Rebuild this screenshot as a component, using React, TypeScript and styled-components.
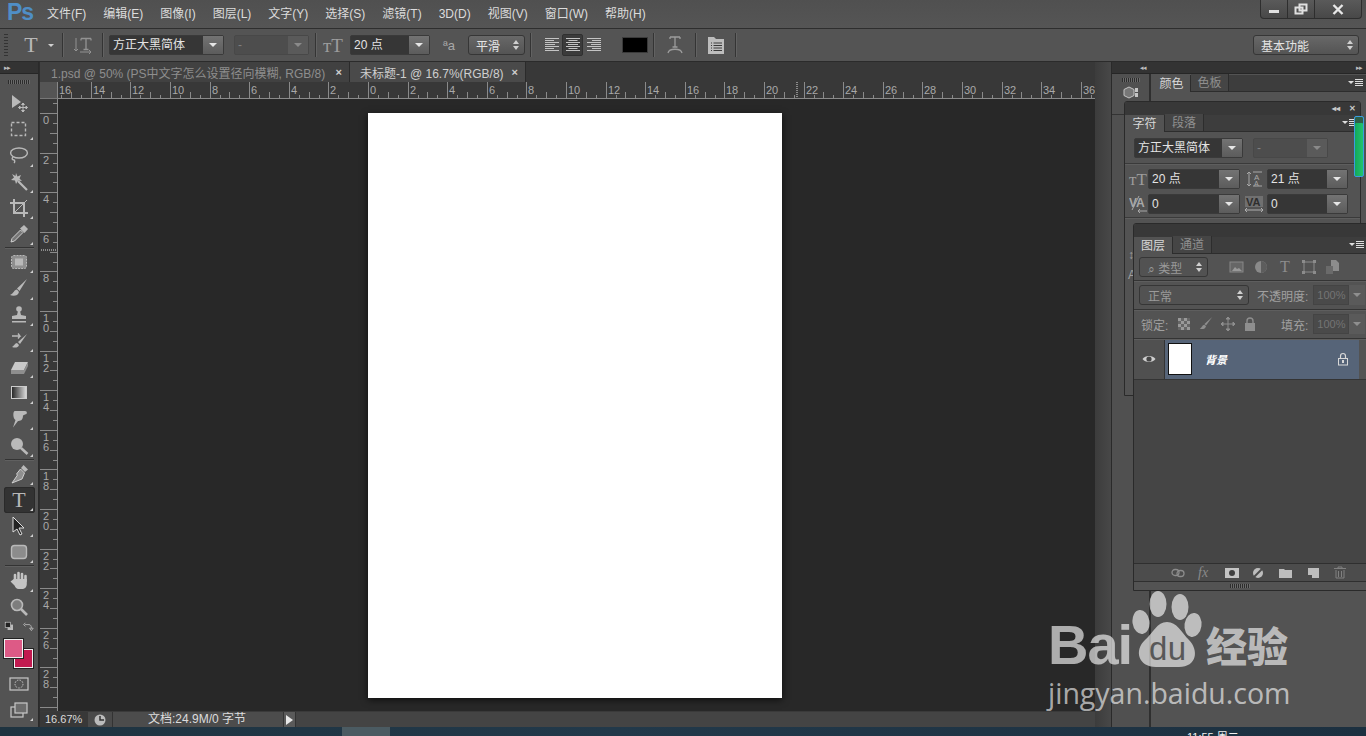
import React from 'react';
import styled, { createGlobalStyle } from 'styled-components';

const GlobalStyle = createGlobalStyle`
    html, body {
        margin: 0;
        padding: 0;
        background: #535353;
    }
    * {
        box-sizing: border-box;
    }
`;

const FONT = `"Liberation Sans", "Noto Sans CJK SC", sans-serif`;

const Page = styled.div`
    position: relative;
    width: 1366px;
    height: 736px;
    overflow: hidden;
    display: flex;
    flex-direction: column;
    background: #535353;
    font-family: ${FONT};
    font-size: 12px;
    color: #d6d6d6;
`;

/* top menu */
const MenuBar = styled.div`
    height: 29px;
    flex: none;
    display: flex;
    align-items: flex-start;
    border-bottom: 1px solid #2e2e2e;
    background: linear-gradient(#505050, #555555);
`;

const Logo = styled.div`
    width: 47px;
    padding: 0 0 0 7px;
    font-size: 23px;
    font-weight: 700;
    letter-spacing: -1px;
    line-height: 25px;
    color: #4f8ec6;
    flex: none;
`;

const MenuList = styled.div`
    display: flex;
    gap: 17px;
    padding-top: 6px;
    line-height: 16px;
    color: #dcdcdc;
`;

const WindowButtons = styled.div`
    margin-left: auto;
    margin-right: 4px;
    width: 102px;
    height: 19px;
    display: flex;
    border: 1px solid #2e2e2e;
    border-top: 0;
    border-radius: 0 0 4px 4px;
    background: linear-gradient(#5a5a5a, #484848);
`;

const WindowButton = styled.div<{ $w: number }>`
    width: ${p => p.$w}px;
    display: flex;
    align-items: center;
    justify-content: center;
    border-right: 1px solid #2e2e2e;
    &:last-child {
        border-right: 0;
    }
`;

/* options bar */
const OptionsBar = styled.div`
    height: 33px;
    flex: none;
    display: flex;
    align-items: center;
    border-bottom: 1px solid #2b2b2b;
    background: #545454;
    position: relative;
`;

const Grip = styled.div`
    width: 4px;
    height: 22px;
    margin-left: 4px;
    background: repeating-linear-gradient(#333 0 1px, transparent 1px 3px);
    flex: none;
`;

const Slot = styled.div<{ $w: number; $dim?: boolean }>`
    width: ${p => p.$w}px;
    height: 100%;
    flex: none;
    display: flex;
    align-items: center;
    justify-content: center;
    opacity: ${p => (p.$dim ? 0.55 : 1)};
`;

const Divider = styled.div`
    width: 1px;
    height: 24px;
    flex: none;
    background: #343434;
    box-shadow: 1px 0 0 #626262;
`;

const SelectWrap = styled.div<{ $w: number; $off?: boolean }>`
    width: ${p => p.$w}px;
    height: 20px;
    flex: none;
    display: flex;
    border: 1px solid ${p => (p.$off ? '#484848' : '#3a3a3a')};
    border-radius: 2px;
    background: ${p => (p.$off ? '#4d4d4d' : '#363636')};
    color: ${p => (p.$off ? '#808080' : '#e4e4e4')};
    line-height: 19px;
`;

const SelectText = styled.div`
    flex: 1;
    padding-left: 3px;
    white-space: nowrap;
    overflow: hidden;
`;

const SelectArrow = styled.div<{ $off?: boolean }>`
    width: 20px;
    flex: none;
    display: flex;
    align-items: center;
    justify-content: center;
    background: ${p => (p.$off ? '#5a5a5a' : 'linear-gradient(#737373, #5c5c5c)')};
    &::after {
        content: '';
        border-left: 4px solid transparent;
        border-right: 4px solid transparent;
        border-top: 4px solid ${p => (p.$off ? '#8a8a8a' : '#e6e6e6')};
    }
`;

const Spinner = styled.div<{ $w: number; $dim?: boolean; $flat?: boolean; $left?: number; $right?: number }>`
    width: ${p => p.$w}px;
    height: 20px;
    flex: none;
    display: flex;
    align-items: center;
    justify-content: space-between;
    margin-left: ${p => p.$left ?? 0}px;
    margin-right: ${p => p.$right ?? 0}px;
    padding: 0 5px 0 ${p => (p.$flat ? 8 : 7)}px;
    border: 1px solid #363636;
    border-radius: 3px;
    color: ${p => (p.$dim ? '#9a9a9a' : '#e4e4e4')};
    background: ${p => (p.$flat ? '#525252' : 'linear-gradient(#686868, #545454)')};
`;

const SpinArrows = styled.span`
    display: flex;
    flex-direction: column;
    gap: 2px;
    &::before, &::after {
        content: '';
        border-left: 3px solid transparent;
        border-right: 3px solid transparent;
    }
    &::before {
        border-bottom: 4px solid #d0d0d0;
    }
    &::after {
        border-top: 4px solid #d0d0d0;
    }
`;

const SmallCaret = styled.span`
    border-left: 3px solid transparent;
    border-right: 3px solid transparent;
    border-top: 3px solid #d0d0d0;
`;

const BigT = styled.span<{ $size?: number; $color?: string }>`
    font-family: "Liberation Serif", serif;
    font-size: ${p => p.$size ?? 20}px;
    line-height: 1;
    color: ${p => p.$color ?? '#b8b8b8'};
`;

const AaGlyph = styled.span`
    color: #a8a8a8;
    font-size: 13px;
`;

const AlignBox = styled.div<{ $on?: boolean }>`
    width: 21px;
    height: 22px;
    flex: none;
    display: flex;
    align-items: center;
    justify-content: center;
    border-radius: 2px;
    background: ${p => (p.$on ? '#3b3b3b' : 'transparent')};
    border: 1px solid ${p => (p.$on ? '#303030' : 'transparent')};
`;

const Swatch = styled.div`
    width: 26px;
    height: 16px;
    flex: none;
    background: #000;
    border: 1px solid #3a3a3a;
`;

const Push = styled.div`
    flex: 1;
`;

/* workspace */
const Workspace = styled.div`
    flex: 1;
    min-height: 0;
    display: flex;
    background: #2d2d2d;
`;

const Toolbox = styled.div`
    width: 39px;
    margin-right: 1px;
    flex: none;
    display: flex;
    flex-direction: column;
    align-items: center;
    background: #535353;
    border-right: 1px solid #2a2a2a;
`;

const DockHead = styled.div`
    height: 12px;
    width: 100%;
    flex: none;
    display: flex;
    align-items: center;
    justify-content: space-between;
    padding: 0 4px;
    font-size: 7px;
    letter-spacing: -1px;
    color: #bdbdbd;
    background: #333333;
    border-bottom: 1px solid #262626;
`;

const HeadLeft = styled.span`
    margin-left: 24px;
`;

const TinyGrip = styled.div<{ $w?: number; $y?: number; $x?: string }>`
    width: ${p => p.$w ?? 22}px;
    height: 4px;
    flex: none;
    margin: ${p => p.$y ?? 4}px ${p => p.$x ?? 'auto'} ${p => p.$y ?? 4}px;
    background: repeating-linear-gradient(90deg, #2c2c2c 0 1px, #6a6a6a 1px 2px);
`;

const ToolButton = styled.div<{ $on?: boolean; $more?: boolean; $h?: number; $top?: number }>`
    position: relative;
    width: 31px;
    height: ${p => p.$h ?? 26.2}px;
    margin-top: ${p => p.$top ?? 0}px;
    flex: none;
    display: flex;
    align-items: center;
    justify-content: center;
    border-radius: 3px;
    background: ${p => (p.$on ? '#333333' : 'transparent')};
    box-shadow: ${p => (p.$on ? 'inset 0 0 0 1px #2a2a2a' : 'none')};
    &::after {
        content: '';
        display: ${p => (p.$more ? 'block' : 'none')};
        position: absolute;
        right: 2px;
        bottom: 2px;
        border-left: 3px solid transparent;
        border-bottom: 3px solid #cfcfcf;
    }
`;

const ToolSep = styled.div`
    width: 29px;
    height: 1px;
    margin-bottom: 1px;
    flex: none;
    background: #333;
    box-shadow: 0 1px 0 #606060;
`;

const Colors = styled.div`
    position: relative;
    width: 30px;
    height: 29px;
    flex: none;
`;

const ColorChip = styled.div<{ $bg: string; $front?: boolean }>`
    position: absolute;
    width: 19px;
    height: 19px;
    left: ${p => (p.$front ? 0 : 10)}px;
    top: ${p => (p.$front ? 0 : 10)}px;
    background: ${p => p.$bg};
    border: 1px solid #f0f0f0;
    outline: 1px solid #222;
    z-index: ${p => (p.$front ? 1 : 0)};
`;

const DocColumn = styled.div`
    flex: 1;
    min-width: 0;
    display: flex;
    flex-direction: column;
`;

const TabStrip = styled.div`
    height: 20px;
    flex: none;
    display: flex;
    background: #383838;
`;

const DocTab = styled.div<{ $w: number; $on?: boolean }>`
    width: ${p => p.$w}px;
    flex: none;
    display: flex;
    align-items: center;
    justify-content: space-between;
    padding: 0 7px 0 ${p => (p.$on ? 10 : 11)}px;
    white-space: nowrap;
    background: ${p => (p.$on ? '#4a4a4a' : '#414141')};
    color: ${p => (p.$on ? '#cfcfcf' : '#8e8e8e')};
    border-right: 1px solid #2b2b2b;
`;

const TabClose = styled.span`
    font-size: 11px;
    font-weight: 700;
    color: #d0d0d0;
`;

const RulerRow = styled.div`
    height: 17px;
    flex: none;
    display: flex;
    background: #383838;
`;

const RulerCorner = styled.div`
    width: 18px;
    flex: none;
    background: #555;
    border-right: 1px solid #888;
    border-bottom: 1px solid #777;
`;

const RulerSvg = styled.svg`
    display: block;
    flex: none;
`;

const CanvasRow = styled.div`
    flex: 1;
    min-height: 0;
    display: flex;
`;

const LeftRuler = styled.div`
    width: 18px;
    flex: none;
    overflow: hidden;
    background: #383838;
`;

const Canvas = styled.div`
    flex: 1;
    background: #282828;
    padding: 14px 0 0 310px;
`;

const Sheet = styled.div`
    width: 414px;
    height: 585px;
    background: #fff;
    box-shadow: 0 2px 7px rgba(0, 0, 0, .65);
`;

const StatusBar = styled.div`
    height: 16px;
    flex: none;
    display: flex;
    align-items: center;
    background: #444444;
    border-top: 1px solid #3a3a3a;
    color: #dcdcdc;
`;

const Zoom = styled.div`
    width: 48px;
    padding-left: 5px;
    font-size: 11px;
    flex: none;
    background: #383838;
    line-height: 15px;
`;

const StatusIcon = styled.div`
    width: 25px;
    height: 100%;
    flex: none;
    display: flex;
    align-items: center;
    justify-content: center;
    background: #4a4a4a;
    border-right: 1px solid #333;
`;

const DocInfo = styled.div`
    width: 171px;
    padding-left: 35px;
    flex: none;
    background: #4c4c4c;
    line-height: 15px;
    border-right: 1px solid #333;
`;

const PlayBtn = styled.div`
    width: 12px;
    height: 100%;
    flex: none;
    display: flex;
    align-items: center;
    justify-content: center;
    background: #5a5a5a;
    border-right: 1px solid #333;
    &::after {
        content: '';
        border-top: 5px solid transparent;
        border-bottom: 5px solid transparent;
        border-left: 7px solid #e8e8e8;
    }
`;

const VScroll = styled.div`
    width: 16px;
    flex: none;
    background: linear-gradient(90deg, #3c3c3c, #484848);
`;

const Dock = styled.div`
    width: 255px;
    flex: none;
    display: flex;
    flex-direction: column;
    background: #535353;
    border-left: 1px solid #2a2a2a;
`;

const DockBody = styled.div`
    flex: 1;
    display: flex;
    min-height: 0;
`;

const IconColumn = styled.div`
    width: 39px;
    flex: none;
    border-right: 2px solid #2f2f2f;
    background: #505050;
`;

const IconCell = styled.div`
    height: 41px;
    display: flex;
    flex-direction: column;
    align-items: center;
    border-bottom: 1px solid #333;
`;

const ColorPanel = styled.div`
    flex: 1;
    padding: 1px 0 0 2px;
`;

const PanelTabs = styled.div`
    height: 17px;
    display: flex;
    align-items: flex-end;
    background: #3d3d3d;
    border-bottom: 1px solid #2d2d2d;
    position: relative;
`;

const PanelTab = styled.div<{ $w: number; $on?: boolean }>`
    width: ${p => p.$w}px;
    height: 17px;
    flex: none;
    text-align: center;
    line-height: 18px;
    color: ${p => (p.$on ? '#d8d8d8' : '#8f8f8f')};
    background: ${p => (p.$on ? '#535353' : '#454545')};
    border-right: 1px solid #2d2d2d;
    position: relative;
    top: ${p => (p.$on ? 1 : 0)}px;
`;

const FlyoutIcon = styled.div<{ $right?: number }>`
    position: absolute;
    right: ${p => p.$right ?? 3}px;
    top: 4px;
    display: flex;
    align-items: center;
    gap: 1px;
    &::before {
        content: '';
        border-left: 3px solid transparent;
        border-right: 3px solid transparent;
        border-top: 3px solid #ddd;
    }
    &::after {
        content: '';
        width: 8px;
        height: 7px;
        background: repeating-linear-gradient(#ddd 0 1px, transparent 1px 2px);
    }
`;

/* floating panels */
const FloatingPanel = styled.div<{ $x: number; $y: number; $w: number; $h: number }>`
    position: absolute;
    left: ${p => p.$x}px;
    top: ${p => p.$y}px;
    width: ${p => p.$w}px;
    height: ${p => p.$h}px;
    display: flex;
    flex-direction: column;
    background: #535353;
    border: 1px solid #2a2a2a;
    border-radius: 3px 3px 0 0;
    overflow: hidden;
`;

const FloatHead = styled.div`
    height: 13px;
    flex: none;
    display: flex;
    align-items: center;
    justify-content: flex-end;
    gap: 9px;
    padding-right: 4px;
    font-size: 8px;
    font-weight: 700;
    color: #c8c8c8;
    background: #383838;
`;

const CharRow = styled.div<{ $gap?: number; $pad?: number; $top?: number }>`
    display: flex;
    align-items: center;
    height: 20px;
    gap: ${p => p.$gap ?? 0}px;
    padding-left: ${p => p.$pad ?? 0}px;
    margin-top: ${p => p.$top ?? 0}px;
    flex: none;
`;

const RowLine = styled.div<{ $top: number }>`
    height: 1px;
    margin-top: ${p => p.$top}px;
    flex: none;
    background: #3a3a3a;
    box-shadow: 0 1px 0 #5e5e5e;
`;

const LabelIcon = styled.div<{ $w: number }>`
    width: ${p => p.$w}px;
    flex: none;
    display: flex;
    justify-content: center;
`;

const Scrollbar = styled.div`
    position: absolute;
    left: 1354px;
    top: 116px;
    width: 10px;
    height: 61px;
    border: 1px solid #3b9de0;
    border-radius: 2px;
    background: linear-gradient(90deg, #14a85a, #22c46e);
    box-shadow: inset 0 6px 0 #2f5f48;
`;

const PanelRow = styled.div<{ $h: number }>`
    height: ${p => p.$h}px;
    flex: none;
    display: flex;
    align-items: center;
    border-bottom: 1px solid #343434;
    box-shadow: 0 1px 0 #5e5e5e;
    position: relative;
`;

const FilterIcons = styled.div<{ $left?: number; $gap?: number }>`
    display: flex;
    align-items: center;
    gap: ${p => p.$gap ?? 8}px;
    margin-left: ${p => p.$left ?? 21}px;
`;

const DimLabel = styled.div<{ $w?: number; $left?: number; $top?: number }>`
    width: ${p => (p.$w ? `${p.$w}px` : 'auto')};
    margin-left: ${p => p.$left ?? 0}px;
    margin-top: ${p => p.$top ?? 0}px;
    flex: none;
    color: #a0a0a0;
    white-space: nowrap;
`;

const NumberField = styled.div`
    width: 36px;
    height: 20px;
    flex: none;
    margin-left: 5px;
    padding-left: 3px;
    line-height: 19px;
    font-size: 11px;
    color: #747474;
    background: #4a4a4a;
    border: 1px solid #444;
`;

const NumberArrow = styled.div`
    width: 16px;
    height: 20px;
    flex: none;
    display: flex;
    align-items: center;
    justify-content: center;
    background: #5a5a5a;
    &::after {
        content: '';
        border-left: 4px solid transparent;
        border-right: 4px solid transparent;
        border-top: 4px solid #8f8f8f;
    }
`;

const LayerRow = styled.div`
    height: 41px;
    flex: none;
    display: flex;
    border-bottom: 1px solid #343434;
`;

const EyeCell = styled.div`
    width: 31px;
    flex: none;
    display: flex;
    align-items: center;
    justify-content: center;
    background: #505050;
    border-right: 1px solid #343434;
`;

const LayerInfo = styled.div`
    width: 194px;
    flex: none;
    display: flex;
    align-items: center;
    padding: 0 0 1px 3px;
    background: #566478;
`;

const Thumb = styled.div`
    width: 24px;
    height: 32px;
    flex: none;
    background: #fff;
    border: 1px solid #111;
`;

const LayerName = styled.div`
    width: 132px;
    margin-left: 13px;
    flex: none;
    font-style: italic;
    font-size: 11px;
    font-weight: 700;
    color: #fff;
`;

const LayerList = styled.div`
    flex: 1;
    background: #454545;
`;

const PanelFoot = styled.div`
    height: 19px;
    flex: none;
    display: flex;
    align-items: center;
    gap: 13px;
    padding-left: 37px;
    background: #4c4c4c;
    border-top: 1px solid #2f2f2f;
    border-bottom: 1px solid #2f2f2f;
`;

const FxLabel = styled.span`
    width: 14px;
    font-family: "Liberation Serif", serif;
    font-style: italic;
    font-size: 14px;
    color: #8a8a8a;
    line-height: 14px;
`;

/* taskbar */
const Taskbar = styled.div`
    height: 9px;
    flex: none;
    display: flex;
    background: linear-gradient(90deg, #1e3340, #22394a 45%, #1c3040);
    overflow: hidden;
    position: relative;
`;

const TaskItem = styled.div`
    width: 48px;
    margin-left: 342px;
    background: #4b5b62;
    flex: none;
`;

const Clock = styled.div`
    margin-left: 797px;
    line-height: 12px;
    padding-top: 4px;
    font-size: 11px;
    color: #f0f0f0;
    white-space: nowrap;
`;

/* watermark */
const Watermark = styled.div`
    position: absolute;
    left: 1048px;
    top: 590px;
    width: 246px;
    color: rgba(255, 255, 255, .62);
    pointer-events: none;
`;

const MarkTop = styled.div`
    height: 82px;
    display: flex;
    align-items: flex-end;
`;

const MarkBai = styled.div`
    width: 84px;
    flex: none;
    font-family: "Liberation Sans", sans-serif;
    font-weight: 700;
    font-size: 56px;
    line-height: 54px;
    letter-spacing: -1px;
`;

const PawSvg = styled.svg`
    flex: none;
`;

const MarkJy = styled.div`
    margin-left: 2px;
    font-family: "Noto Sans CJK SC", sans-serif;
    font-weight: 900;
    font-size: 41px;
    line-height: 56px;
    white-space: nowrap;
`;

const MarkUrl = styled.div`
    margin-top: 3px;
    font-family: "Open Sans", sans-serif;
    font-size: 28.5px;
    line-height: 36px;
    white-space: nowrap;
`;

/* drawings */
const G = '#b9b9b9';
const PAW = 'rgba(255,255,255,.62)';

const Ico = ({ s = 20, children }: { s?: number; children: React.ReactNode }) => (
    <svg width={s} height={s} viewBox="0 0 20 20" fill="none">{children}</svg>
);

const tools: { [k: string]: React.ReactNode } = {
    move: <><path d="M3 2l9 7-9 6z" fill={G} /><path d="M14 10v9M9.5 14.5h9M14 10l-1.5 1.5h3zM14 19l-1.5-1.5h3zM9.5 14.5l1.5-1.5v3zM18.5 14.5l-1.5-1.5v3z" stroke={G} /></>,
    marquee: <rect x="2.5" y="3.5" width="14" height="13" stroke={G} strokeWidth="1.4" strokeDasharray="3 2" />,
    lasso: <><ellipse cx="10" cy="8" rx="8.4" ry="5" stroke={G} strokeWidth="1.4" /><path d="M4 12c-1.5 1.5-1 3 1 3 1 0 1 2 0 3" stroke={G} strokeWidth="1.4" /></>,
    wand: <><path d="M9 9l9 9" stroke={G} strokeWidth="2.2" /><path d="M7 1l1.5 3.5L12 3l-1.5 3.5L13 9l-4-.5L7 12 6 8.5 2 8l3-2.5L3 2l3.5 2z" fill={G} /></>,
    crop: <><path d="M5 1v14h14M1 5h14v14" stroke={G} strokeWidth="2" /><path d="M5 15L18 2" stroke={G} /></>,
    dropper: <><path d="M11.5 6L3 14.5l-1 3.5 3.500-1L14 8.500z" fill="#777" stroke="#cfcfcf" strokeWidth="1" /><path d="M11 4.500l4-3.500 4 4-3.500 4z" fill={G} /></>,
    heal: <><rect x="2.500" y="3.500" width="15" height="13" rx="2" fill="#8f8f8f" stroke={G} strokeDasharray="2 1" /><rect x="6" y="6.500" width="8" height="7" fill={G} /></>,
    brush: <><path d="M18 1L8 10.500l2.500 2.500z" fill={G} /><path d="M8 11.500c-3 0-3 4-7 5.500 3.500 1.500 8 1 9-3z" fill={G} /></>,
    stamp: <><circle cx="10" cy="4" r="2.800" fill={G} /><path d="M9 6h2l1 4 5 1v3H3v-3l5-1z" fill={G} /><path d="M3 16h14v1.500H3z" fill={G} /></>,
    history: <><path d="M18 3L9 11l2 2z" fill={G} /><path d="M8 12c-2 0-3 3-5 4 3 1 6 1 7-2z" fill={G} /><path d="M3 5h8l-2-2.500M11 5L9 7.500" stroke={G} strokeWidth="1.300" /></>,
    eraser: <><path d="M6 5h13l-4 8H2z" fill="#c8c8c8" /><path d="M2 13h13v4H2zM15 13l4-8v4l-4 8z" fill="#8e8e8e" /></>,
    gradient: <><defs><linearGradient id="gr"><stop stopColor="#222" /><stop offset="1" stopColor="#ddd" /></linearGradient></defs><rect x="2.500" y="3.500" width="15" height="12" fill="url(#gr)" stroke="#ccc" /></>,
    smudge: <path d="M6 2h10c2.500 0 2.500 3.500 0 3.500l-2 1c0 5-3 5.500-5 5.500l-5 6.500 2.500-7.500C4 10 3.500 2 6 2z" fill={G} />,
    dodge: <><circle cx="8" cy="8" r="6" fill={G} /><path d="M12 12l6.500 6" stroke={G} strokeWidth="2.600" /></>,
    pen: <><path d="M14.500 1l4.500 4.500-3 2.500-4-4z" fill={G} /><path d="M11.500 5l4 4-2.500 6L3 19l5.500-8-1-1z" fill="#8f8f8f" stroke="#d8d8d8" strokeWidth=".9" /></>,
    pathSel: <path d="M4 1v15l4-3 3 6 2-1-3-6h5z" fill="#222" stroke="#ddd" />,
    shape: <rect x="2.500" y="3.500" width="15" height="13" rx="3" fill="#8c8c8c" stroke={G} strokeWidth="1.400" />,
    hand: <><path d="M6 11V5M9.500 10V3M13 10V4M16.500 11V6" stroke="#c4c4c4" strokeWidth="2.600" strokeLinecap="round" /><path d="M4.800 9H17.800v5c0 3-2 5-5 5H9.500c-2 0-3-1.500-4-3.500L1.500 11.500 3.500 10z" fill="#c4c4c4" /></>,
    zoom: <><circle cx="8" cy="8" r="5.500" fill="#7d7d7d" stroke={G} strokeWidth="1.600" /><path d="M12 12l6 6" stroke={G} strokeWidth="2.600" /></>,
    mask: <><rect x="1" y="4" width="18" height="12" stroke="#c8c8c8" strokeWidth="1.200" /><circle cx="10" cy="10" r="4" stroke="#c8c8c8" strokeDasharray="1.500 1.200" /></>,
    screen: <><rect x="2" y="7" width="12" height="10" stroke="#c8c8c8" strokeWidth="1.200" /><rect x="6" y="3" width="12" height="10" fill="#6c6c6c" stroke="#c8c8c8" strokeWidth="1.200" /></>,
    swapDefault: <><rect x="6" y="6" width="9" height="9" fill="#bbb" /><rect x="2" y="2" width="9" height="9" fill="#222" stroke="#ddd" /></>,
    swapArrow: <path d="M3 6h7c3 0 4 3 4 6M1 6l3-3M1 6l3 3M11 12h6l-3 4z" stroke="#ccc" strokeWidth="1.200" />,
};

const ToolIco = ({ n, s }: { n: string; s?: number }) => <Ico s={s}>{tools[n]}</Ico>;

const AlignIcon = ({ kind }: { kind: 'l' | 'c' | 'r' }) => {
    const rows = [14, 9, 14, 10, 14, 9, 14];
    return (
        <svg width="14" height="14" viewBox="0 0 14 14">
            {rows.map((w, i) => {
                const x = kind === 'l' ? 0 : kind === 'c' ? (14 - w) / 2 : 14 - w;
                return <rect key={i} x={x} y={i * 2} width={w} height="1" fill="#c4c4c4" />;
            })}
        </svg>
    );
};

const TopRuler = () => {
    const zero = 310;
    const unit = 19.8;
    const ticks = [];
    for (let i = -16; i <= 37; i += 0.5) ticks.push(i);
    const labels = [];
    for (let i = -16; i <= 36; i += 2) labels.push(i);
    return (
        <RulerSvg width="1037" height="17">
            <rect x="0" y="16" width="1037" height="1" fill="#8a8a8a" />
            {ticks.map(i => {
                const x = Math.round(zero + i * unit);
                const major = i % 2 === 0;
                const mid = i % 1 === 0;
                return <rect key={i} x={x} y={major ? 0 : mid ? 10 : 13} width="1" height={major ? 16 : mid ? 6 : 3} fill="#8a8a8a" />;
            })}
            {labels.map(i => (
                <text key={i} x={Math.max(1, Math.round(zero + i * unit) + 2)} y="12" fontSize="11" fill="#a9a9a9" fontFamily="Liberation Sans">{Math.abs(i)}</text>
            ))}
            <path d="M739 0v16" stroke="#ddd" strokeDasharray="1 1" />
        </RulerSvg>
    );
};

const SideRuler = () => {
    const zero = 14;
    const unit = 19.8;
    const ticks = [];
    for (let i = -0.5; i <= 31; i += 0.5) ticks.push(i);
    const labels = [];
    for (let i = 0; i <= 28; i += 2) labels.push(i);
    return (
        <RulerSvg width="18" height="612">
            <rect x="17" y="0" width="1" height="612" fill="#8a8a8a" />
            {ticks.map(i => {
                const y = Math.round(zero + i * unit);
                const major = i % 2 === 0;
                const mid = i % 1 === 0;
                return <rect key={i} x={major ? 0 : mid ? 10 : 13} y={y} width={major ? 17 : mid ? 7 : 4} height="1" fill="#8a8a8a" />;
            })}
            {labels.map(i => String(i).split('').map((d, j) => (
                <text key={`${i}-${j}`} x="3" y={Math.round(zero + i * unit) + 11 + j * 10} fontSize="11" fill="#a9a9a9" fontFamily="Liberation Sans">{d}</text>
            )))}
            <path d="M1 151h16" stroke="#ddd" strokeDasharray="1 1" />
        </RulerSvg>
    );
};

const Select = ({ w, text, off }: { w: number; text: string; off?: boolean }) => (
    <SelectWrap $w={w} $off={off}>
        <SelectText>{text}</SelectText>
        <SelectArrow $off={off} />
    </SelectWrap>
);

const menus = ['文件(F)', '编辑(E)', '图像(I)', '图层(L)', '文字(Y)', '选择(S)', '滤镜(T)', '3D(D)', '视图(V)', '窗口(W)', '帮助(H)'];

const App = () => {
    return (
        <Page>
            <GlobalStyle />
            <MenuBar>
                <Logo>Ps</Logo>
                <MenuList>
                    {menus.map(m => <span key={m}>{m}</span>)}
                </MenuList>
                <WindowButtons>
                    <WindowButton $w={28}>
                        <svg width="12" height="12"><rect x="1" y="7" width="10" height="3" fill="#e0e0e0" /></svg>
                    </WindowButton>
                    <WindowButton $w={27}>
                        <svg width="14" height="12"><path d="M5.500 1.500h7v6h-7zM1.500 4.500h7v6h-7z" fill="none" stroke="#e0e0e0" strokeWidth="2" /></svg>
                    </WindowButton>
                    <WindowButton $w={47}>
                        <svg width="12" height="11"><path d="M1.500 1l9 9M10.500 1l-9 9" stroke="#e8e8e8" strokeWidth="2.400" /></svg>
                    </WindowButton>
                </WindowButtons>
            </MenuBar>

            <OptionsBar>
                <Grip />
                <Slot $w={16} />
                <Slot $w={14}><BigT $size={22}>T</BigT></Slot>
                <Slot $w={10} />
                <Slot $w={6}><SmallCaret /></Slot>
                <Slot $w={8} />
                <Divider />
                <Slot $w={39} $dim>
                    <svg width="20" height="18"><path d="M8 2.500h10M13 2.500v11M10.500 13.500h5M8 2.500v2M18 2.500v2" fill="none" stroke="#c8c8c8" strokeWidth="1.300" /><path d="M3 2v13M1 13l2 2 2-2M7 16h11M16 14l2 2-2 2" fill="none" stroke="#c8c8c8" /></svg>
                </Slot>
                <Divider />
                <Slot $w={6} />
                <Select w={115} text="方正大黑简体" />
                <Slot $w={10} />
                <Select w={75} text=" -" off />
                <Slot $w={6} />
                <Divider />
                <Slot $w={34}><BigT $size={19} $color="#9c9c9c">тT</BigT></Slot>
                <Select w={80} text="20 点" />
                <Slot $w={38}><AaGlyph>ªa</AaGlyph></Slot>
                <Spinner $w={57}>平滑<SpinArrows /></Spinner>
                <Slot $w={5} />
                <Divider />
                <Slot $w={10} />
                <AlignBox><AlignIcon kind="l" /></AlignBox>
                <AlignBox $on><AlignIcon kind="c" /></AlignBox>
                <AlignBox><AlignIcon kind="r" /></AlignBox>
                <Slot $w={18} />
                <Swatch />
                <Slot $w={5} />
                <Divider />
                <Slot $w={41} $dim>
                    <svg width="16" height="20"><path d="M3 2h10M8 2v10M5.500 12h5M3 2v2M13 2v2" fill="none" stroke="#d8d8d8" strokeWidth="1.300" /><path d="M1 18c1-5 13-5 14 0" fill="none" stroke="#d8d8d8" strokeWidth="1.300" /></svg>
                </Slot>
                <Divider />
                <Slot $w={39}>
                    <svg width="16" height="18"><path d="M0 1h6l2 2h8v15H0z" fill="#bdbdbd" /><path d="M3 7h1M3 9.500h1M3 12h1M3 14.500h1M5.500 7H14M5.500 9.500H14M5.500 12H14M5.500 14.500H14" stroke="#3a3a3a" /></svg>
                </Slot>
                <Divider />
                <Push />
                <Spinner $w={106} $right={7}>基本功能<SpinArrows /></Spinner>
            </OptionsBar>

            <Workspace>
                <Toolbox>
                    <DockHead>▸▸</DockHead>
                    <TinyGrip $y={6} />
                    <ToolButton><ToolIco n="move" /></ToolButton>
                    <ToolButton $more><ToolIco n="marquee" /></ToolButton>
                    <ToolButton $more><ToolIco n="lasso" /></ToolButton>
                    <ToolButton $more><ToolIco n="wand" /></ToolButton>
                    <ToolButton $more><ToolIco n="crop" /></ToolButton>
                    <ToolButton $more><ToolIco n="dropper" /></ToolButton>
                    <ToolSep />
                    <ToolButton $more><ToolIco n="heal" /></ToolButton>
                    <ToolButton $more><ToolIco n="brush" /></ToolButton>
                    <ToolButton $more><ToolIco n="stamp" /></ToolButton>
                    <ToolButton $more><ToolIco n="history" /></ToolButton>
                    <ToolButton $more><ToolIco n="eraser" /></ToolButton>
                    <ToolButton $more><ToolIco n="gradient" /></ToolButton>
                    <ToolButton $more><ToolIco n="smudge" /></ToolButton>
                    <ToolButton $more><ToolIco n="dodge" /></ToolButton>
                    <ToolSep />
                    <ToolButton $more><ToolIco n="pen" /></ToolButton>
                    <ToolButton $on $more><BigT $size={22}>T</BigT></ToolButton>
                    <ToolButton $more><ToolIco n="pathSel" /></ToolButton>
                    <ToolButton $more><ToolIco n="shape" /></ToolButton>
                    <ToolSep />
                    <ToolButton $more><ToolIco n="hand" /></ToolButton>
                    <ToolButton><ToolIco n="zoom" /></ToolButton>
                    <ToolButton $h={14}>
                        <ToolIco n="swapDefault" s={12} />
                        <Slot $w={7} />
                        <ToolIco n="swapArrow" s={12} />
                    </ToolButton>
                    <ToolButton $h={40}>
                        <Colors>
                            <ColorChip $bg="#dd5a86" $front />
                            <ColorChip $bg="#c21a50" />
                        </Colors>
                    </ToolButton>
                    <ToolButton $h={20}><ToolIco n="mask" /></ToolButton>
                    <ToolButton $more $h={26} $top={3}><ToolIco n="screen" /></ToolButton>
                </Toolbox>

                <DocColumn>
                    <TabStrip>
                        <DocTab $w={310}>1.psd @ 50% (PS中文字怎么设置径向模糊, RGB/8)<TabClose>×</TabClose></DocTab>
                        <DocTab $w={176} $on>未标题-1 @ 16.7%(RGB/8)<TabClose>×</TabClose></DocTab>
                    </TabStrip>
                    <RulerRow>
                        <RulerCorner />
                        <TopRuler />
                    </RulerRow>
                    <CanvasRow>
                        <LeftRuler><SideRuler /></LeftRuler>
                        <Canvas><Sheet /></Canvas>
                    </CanvasRow>
                    <StatusBar>
                        <Zoom>16.67%</Zoom>
                        <StatusIcon>
                            <svg width="12" height="12"><circle cx="6" cy="6" r="5.500" fill="#bbb" /><path d="M6 2v4h4" fill="none" stroke="#333" strokeWidth="1.500" /></svg>
                        </StatusIcon>
                        <DocInfo>文档:24.9M/0 字节</DocInfo>
                        <PlayBtn />
                    </StatusBar>
                </DocColumn>

                <VScroll />

                <Dock>
                    <DockHead>
                        <HeadLeft>◂◂</HeadLeft>
                        <span>▸▸</span>
                    </DockHead>
                    <DockBody>
                        <IconColumn>
                            <IconCell>
                                <TinyGrip $w={18} />
                                <svg width="16" height="14"><path d="M6 1l5 2.500v6L6 12 1 9.500v-6z" fill="#777" stroke="#c4c4c4" /><rect x="12" y="2" width="3" height="4" fill="#c4c4c4" /><rect x="12" y="7" width="3" height="4" fill="#c4c4c4" /></svg>
                            </IconCell>
                        </IconColumn>
                        <ColorPanel>
                            <PanelTabs>
                                <PanelTab $w={38} $on>颜色</PanelTab>
                                <PanelTab $w={38}>色板</PanelTab>
                                <FlyoutIcon />
                            </PanelTabs>
                        </ColorPanel>
                    </DockBody>
                </Dock>
            </Workspace>

            <Taskbar>
                <TaskItem />
                <Clock>11:55 周二</Clock>
            </Taskbar>

            <FloatingPanel $x={1124} $y={101} $w={237} $h={295}>
                <FloatHead><span>◂◂</span><span>✕</span></FloatHead>
                <PanelTabs>
                    <PanelTab $w={40} $on>字符</PanelTab>
                    <PanelTab $w={39}>段落</PanelTab>
                    <FlyoutIcon />
                </PanelTabs>
                <CharRow $gap={10} $pad={9} $top={6}>
                    <Select w={109} text="方正大黑简体" />
                    <Select w={75} text=" -" off />
                </CharRow>
                <RowLine $top={5} />
                <CharRow $pad={3} $top={5}>
                    <LabelIcon $w={20}><BigT $size={17} $color="#9c9c9c">тT</BigT></LabelIcon>
                    <Select w={92} text="20 点" />
                    <LabelIcon $w={27}>
                        <svg width="18" height="16"><path d="M4 1v14M2 3l2-2 2 2M2 13l2 2 2-2M8 1h9M8 15h9" fill="none" stroke="#a8a8a8" /><text x="9" y="9" fontSize="8" fill="#a8a8a8" fontFamily="Liberation Sans">A</text><text x="9" y="15" fontSize="7" fill="#a8a8a8" fontFamily="Liberation Sans">A</text></svg>
                    </LabelIcon>
                    <Select w={81} text="21 点" />
                </CharRow>
                <CharRow $pad={3} $top={5}>
                    <LabelIcon $w={20}>
                        <svg width="19" height="17"><text x="0" y="11" fontSize="12" fill="#a8a8a8" fontFamily="Liberation Sans" fontWeight="700">VA</text><path d="M3 14L10 0" stroke="#a8a8a8" /><path d="M9 15h9M9 15l2-2M9 15l2 2" fill="none" stroke="#a8a8a8" /></svg>
                    </LabelIcon>
                    <Select w={92} text="0" />
                    <LabelIcon $w={27}>
                        <svg width="20" height="17"><rect x="1" y="0" width="18" height="11" fill="#707070" /><text x="2" y="10" fontSize="11" fill="#2e2e2e" fontFamily="Liberation Sans" fontWeight="700">VA</text><path d="M1 14h18M1 14l2-2M1 14l2 2M19 14l-2-2M19 14l-2 2" fill="none" stroke="#b0b0b0" /></svg>
                    </LabelIcon>
                    <Select w={81} text="0" />
                </CharRow>
                <RowLine $top={3} />
                <DimLabel $left={3} $top={30}>↕</DimLabel>
                <DimLabel $left={3} $top={6}>A</DimLabel>
            </FloatingPanel>

            <Scrollbar />

            <FloatingPanel $x={1133} $y={223} $w={240} $h={368}>
                <FloatHead />
                <PanelTabs>
                    <PanelTab $w={39} $on>图层</PanelTab>
                    <PanelTab $w={39}>通道</PanelTab>
                    <FlyoutIcon $right={8} />
                </PanelTabs>
                <PanelRow $h={27}>
                    <Spinner $w={69} $dim $flat $left={5}>⌕ 类型<SpinArrows /></Spinner>
                    <FilterIcons>
                        <svg width="16" height="14"><rect x="1" y="2" width="13" height="10" fill="#666" stroke="#888" /><path d="M3 11l3-4 2 2 2-1 3 3z" fill="#999" /></svg>
                        <svg width="16" height="14"><circle cx="8" cy="7" r="6" fill="#8a8a8a" /><path d="M8 1a6 6 0 0 1 0 12z" fill="#5d5d5d" /></svg>
                        <Slot $w={16}><BigT $size={16} $color="#8c8c8c">T</BigT></Slot>
                        <svg width="16" height="14"><path d="M3 2h10v10H3z" fill="none" stroke="#8c8c8c" /><path d="M1 0h3v3H1zM12 0h3v3h-3zM1 11h3v3H1zM12 11h3v3h-3z" fill="#8c8c8c" /></svg>
                        <svg width="16" height="14"><path d="M6 0h5l3 3v8H6z" fill="#8c8c8c" /><rect x="1" y="6" width="7" height="8" fill="#6a6a6a" /></svg>
                    </FilterIcons>
                </PanelRow>
                <PanelRow $h={29}>
                    <Spinner $w={110} $dim $flat $left={5}>正常<SpinArrows /></Spinner>
                    <DimLabel $left={8}>不透明度:</DimLabel>
                    <NumberField>100%</NumberField>
                    <NumberArrow />
                </PanelRow>
                <PanelRow $h={29}>
                    <DimLabel $left={7} $w={34}>锁定:</DimLabel>
                    <FilterIcons $left={1} $gap={6}>
                        <svg width="16" height="14"><rect x="2" y="1" width="12" height="12" fill="#666" /><path d="M2 1h3v3H2zM8 1h3v3H8zM5 4h3v3H5zM11 4h3v3h-3zM2 7h3v3H2zM8 7h3v3H8zM5 10h3v3H5zM11 10h3v3h-3z" fill="#999" /></svg>
                        <svg width="16" height="14" viewBox="0 0 20 18"><path d="M18 0L8 9l2 2z" fill="#8e8e8e" /><path d="M8 10c-3 0-3 4-6 5 3 1 7 1 8-3z" fill="#8e8e8e" /></svg>
                        <svg width="16" height="14"><path d="M8 0v14M1 7h14M8 0L6 2h4zM8 14l-2-2h4zM1 7l2-2v4zM15 7l-2-2v4z" stroke="#8e8e8e" fill="#8e8e8e" /></svg>
                        <svg width="16" height="14"><path d="M5 6V4a3 3 0 0 1 6 0v2" fill="none" stroke="#8e8e8e" strokeWidth="1.400" /><rect x="3" y="6" width="10" height="8" fill="#8e8e8e" /></svg>
                    </FilterIcons>
                    <DimLabel $left={23}>填充:</DimLabel>
                    <NumberField>100%</NumberField>
                    <NumberArrow />
                </PanelRow>
                <LayerRow>
                    <EyeCell>
                        <svg width="14" height="10"><path d="M0.500 5C3 1 11 1 13.500 5 11 9 3 9 0.500 5z" fill="#cfcfcf" /><circle cx="7" cy="5" r="2.600" fill="#444" /></svg>
                    </EyeCell>
                    <LayerInfo>
                        <Thumb />
                        <LayerName>背景</LayerName>
                        <svg width="12" height="14"><path d="M3.500 6V4a2.500 2.500 0 0 1 5 0v2" fill="none" stroke="#d8d8d8" strokeWidth="1.200" /><rect x="1.500" y="6.500" width="9" height="6.500" fill="none" stroke="#d8d8d8" /><rect x="5" y="8" width="2" height="3" fill="#d8d8d8" /></svg>
                    </LayerInfo>
                </LayerRow>
                <LayerList />
                <PanelFoot>
                    <svg width="14" height="10"><rect x="1" y="1.500" width="7" height="6" rx="3" fill="none" stroke="#8c8c8c" strokeWidth="1.300" /><rect x="6" y="2.500" width="7" height="6" rx="3" fill="none" stroke="#8c8c8c" strokeWidth="1.300" /></svg>
                    <FxLabel>fx</FxLabel>
                    <svg width="14" height="10"><rect width="14" height="10" fill="#c4c4c4" /><circle cx="7" cy="5" r="3" fill="#3f3f3f" /></svg>
                    <svg width="14" height="12"><circle cx="6" cy="6" r="5" fill="#bdbdbd" /><path d="M2 10L10 2" stroke="#4c4c4c" strokeWidth="2" /></svg>
                    <svg width="14" height="10"><path d="M0 1h5l1 1h7v8H0z" fill="#bdbdbd" /></svg>
                    <svg width="14" height="12"><path d="M2 1h11v10H6V8H2z" fill="#bdbdbd" /></svg>
                    <svg width="14" height="13"><path d="M1 2.500h12M5 2V1h4v1M3 4v8h8V4M5.500 5v6M8.500 5v6" fill="none" stroke="#808080" /></svg>
                </PanelFoot>
                <TinyGrip $w={20} $y={2} $x="96px" />
            </FloatingPanel>

            <Watermark>
                <MarkTop>
                    <MarkBai>Bai</MarkBai>
                    <PawSvg width="72" height="82" viewBox="0 0 72 82">
                        <ellipse cx="9" cy="32" rx="8.500" ry="12" fill={PAW} transform="rotate(-8 9 32)" />
                        <ellipse cx="26" cy="14" rx="8.500" ry="13" fill={PAW} />
                        <ellipse cx="48" cy="17" rx="8.500" ry="13" fill={PAW} />
                        <ellipse cx="61" cy="35" rx="8.500" ry="12" fill={PAW} transform="rotate(8 61 35)" />
                        <path d="M35 32c10 0 14 10 22 18 10 10 8 27-10 27H24C6 77 2 60 13 50c8-7 12-18 22-18z" fill={PAW} />
                        <text x="17" y="70" fontSize="33" fontWeight="400" fontFamily="Liberation Sans" fill="#585858" textLength="37">du</text>
                    </PawSvg>
                    <MarkJy>经验</MarkJy>
                </MarkTop>
                <MarkUrl>jingyan.baidu.com</MarkUrl>
            </Watermark>
        </Page>
    );
};

export default App;
